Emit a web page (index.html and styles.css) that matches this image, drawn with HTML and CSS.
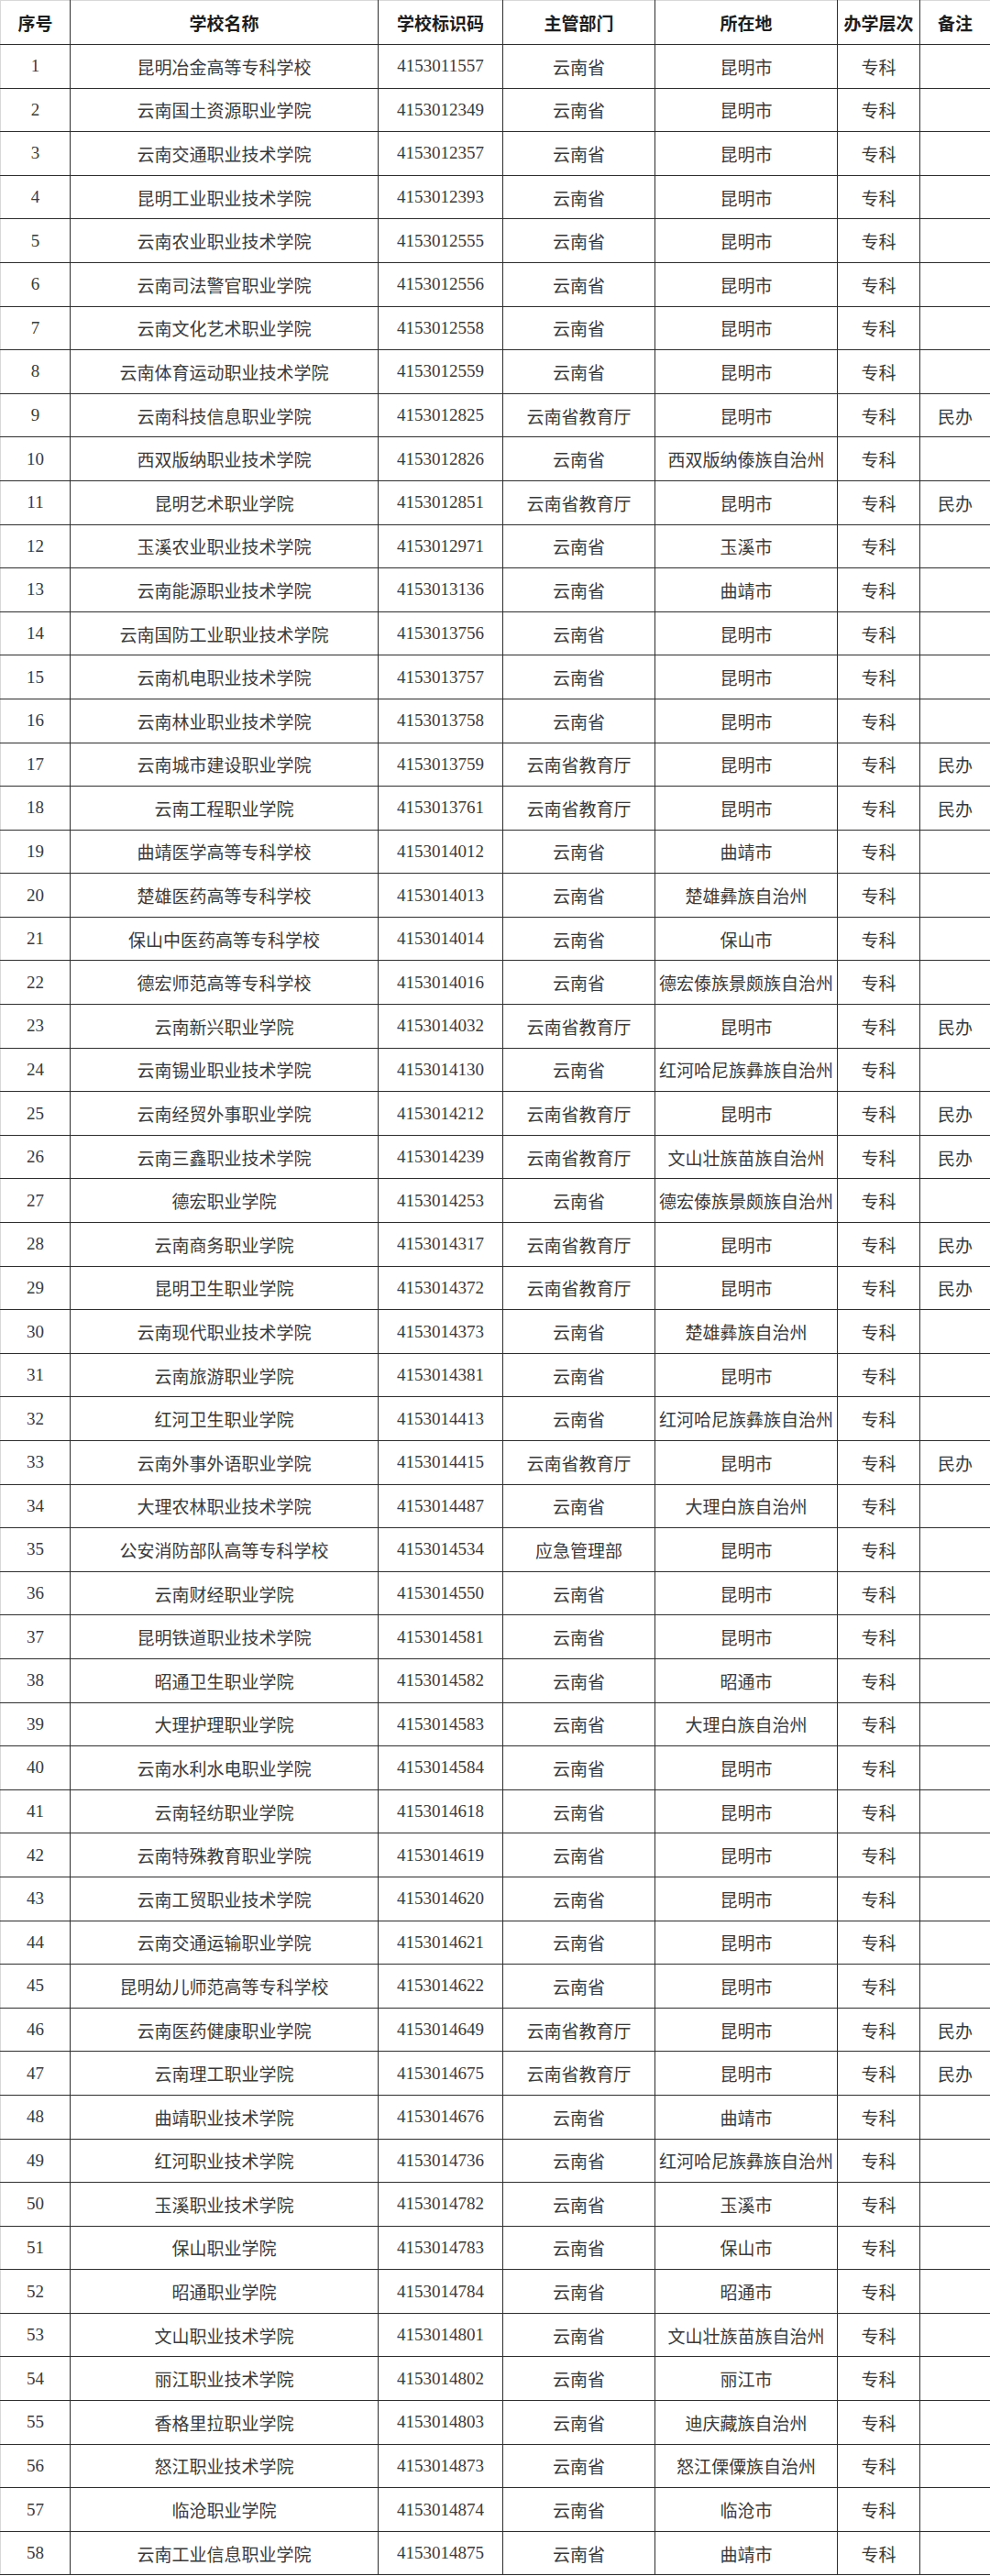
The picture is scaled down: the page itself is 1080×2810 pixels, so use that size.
FILE: index.html
```html
<!DOCTYPE html>
<html lang="zh-CN">
<head>
<meta charset="utf-8">
<title>云南省高职专科院校名单</title>
<link rel="stylesheet" href="styles.css">
</head>
<body>
<table class="list">
<colgroup>
<col class="c-no"><col class="c-name"><col class="c-code"><col class="c-dept"><col class="c-loc"><col class="c-level"><col class="c-note">
</colgroup>
<thead>
<tr><th>序号</th><th>学校名称</th><th>学校标识码</th><th>主管部门</th><th>所在地</th><th>办学层次</th><th>备注</th></tr>
</thead>
<tbody>
<tr><td>1</td><td>昆明冶金高等专科学校</td><td>4153011557</td><td>云南省</td><td>昆明市</td><td>专科</td><td></td></tr>
<tr><td>2</td><td>云南国土资源职业学院</td><td>4153012349</td><td>云南省</td><td>昆明市</td><td>专科</td><td></td></tr>
<tr><td>3</td><td>云南交通职业技术学院</td><td>4153012357</td><td>云南省</td><td>昆明市</td><td>专科</td><td></td></tr>
<tr><td>4</td><td>昆明工业职业技术学院</td><td>4153012393</td><td>云南省</td><td>昆明市</td><td>专科</td><td></td></tr>
<tr><td>5</td><td>云南农业职业技术学院</td><td>4153012555</td><td>云南省</td><td>昆明市</td><td>专科</td><td></td></tr>
<tr><td>6</td><td>云南司法警官职业学院</td><td>4153012556</td><td>云南省</td><td>昆明市</td><td>专科</td><td></td></tr>
<tr><td>7</td><td>云南文化艺术职业学院</td><td>4153012558</td><td>云南省</td><td>昆明市</td><td>专科</td><td></td></tr>
<tr><td>8</td><td>云南体育运动职业技术学院</td><td>4153012559</td><td>云南省</td><td>昆明市</td><td>专科</td><td></td></tr>
<tr><td>9</td><td>云南科技信息职业学院</td><td>4153012825</td><td>云南省教育厅</td><td>昆明市</td><td>专科</td><td>民办</td></tr>
<tr><td>10</td><td>西双版纳职业技术学院</td><td>4153012826</td><td>云南省</td><td>西双版纳傣族自治州</td><td>专科</td><td></td></tr>
<tr><td>11</td><td>昆明艺术职业学院</td><td>4153012851</td><td>云南省教育厅</td><td>昆明市</td><td>专科</td><td>民办</td></tr>
<tr><td>12</td><td>玉溪农业职业技术学院</td><td>4153012971</td><td>云南省</td><td>玉溪市</td><td>专科</td><td></td></tr>
<tr><td>13</td><td>云南能源职业技术学院</td><td>4153013136</td><td>云南省</td><td>曲靖市</td><td>专科</td><td></td></tr>
<tr><td>14</td><td>云南国防工业职业技术学院</td><td>4153013756</td><td>云南省</td><td>昆明市</td><td>专科</td><td></td></tr>
<tr><td>15</td><td>云南机电职业技术学院</td><td>4153013757</td><td>云南省</td><td>昆明市</td><td>专科</td><td></td></tr>
<tr><td>16</td><td>云南林业职业技术学院</td><td>4153013758</td><td>云南省</td><td>昆明市</td><td>专科</td><td></td></tr>
<tr><td>17</td><td>云南城市建设职业学院</td><td>4153013759</td><td>云南省教育厅</td><td>昆明市</td><td>专科</td><td>民办</td></tr>
<tr><td>18</td><td>云南工程职业学院</td><td>4153013761</td><td>云南省教育厅</td><td>昆明市</td><td>专科</td><td>民办</td></tr>
<tr><td>19</td><td>曲靖医学高等专科学校</td><td>4153014012</td><td>云南省</td><td>曲靖市</td><td>专科</td><td></td></tr>
<tr><td>20</td><td>楚雄医药高等专科学校</td><td>4153014013</td><td>云南省</td><td>楚雄彝族自治州</td><td>专科</td><td></td></tr>
<tr><td>21</td><td>保山中医药高等专科学校</td><td>4153014014</td><td>云南省</td><td>保山市</td><td>专科</td><td></td></tr>
<tr><td>22</td><td>德宏师范高等专科学校</td><td>4153014016</td><td>云南省</td><td>德宏傣族景颇族自治州</td><td>专科</td><td></td></tr>
<tr><td>23</td><td>云南新兴职业学院</td><td>4153014032</td><td>云南省教育厅</td><td>昆明市</td><td>专科</td><td>民办</td></tr>
<tr><td>24</td><td>云南锡业职业技术学院</td><td>4153014130</td><td>云南省</td><td>红河哈尼族彝族自治州</td><td>专科</td><td></td></tr>
<tr><td>25</td><td>云南经贸外事职业学院</td><td>4153014212</td><td>云南省教育厅</td><td>昆明市</td><td>专科</td><td>民办</td></tr>
<tr><td>26</td><td>云南三鑫职业技术学院</td><td>4153014239</td><td>云南省教育厅</td><td>文山壮族苗族自治州</td><td>专科</td><td>民办</td></tr>
<tr><td>27</td><td>德宏职业学院</td><td>4153014253</td><td>云南省</td><td>德宏傣族景颇族自治州</td><td>专科</td><td></td></tr>
<tr><td>28</td><td>云南商务职业学院</td><td>4153014317</td><td>云南省教育厅</td><td>昆明市</td><td>专科</td><td>民办</td></tr>
<tr><td>29</td><td>昆明卫生职业学院</td><td>4153014372</td><td>云南省教育厅</td><td>昆明市</td><td>专科</td><td>民办</td></tr>
<tr><td>30</td><td>云南现代职业技术学院</td><td>4153014373</td><td>云南省</td><td>楚雄彝族自治州</td><td>专科</td><td></td></tr>
<tr><td>31</td><td>云南旅游职业学院</td><td>4153014381</td><td>云南省</td><td>昆明市</td><td>专科</td><td></td></tr>
<tr><td>32</td><td>红河卫生职业学院</td><td>4153014413</td><td>云南省</td><td>红河哈尼族彝族自治州</td><td>专科</td><td></td></tr>
<tr><td>33</td><td>云南外事外语职业学院</td><td>4153014415</td><td>云南省教育厅</td><td>昆明市</td><td>专科</td><td>民办</td></tr>
<tr><td>34</td><td>大理农林职业技术学院</td><td>4153014487</td><td>云南省</td><td>大理白族自治州</td><td>专科</td><td></td></tr>
<tr><td>35</td><td>公安消防部队高等专科学校</td><td>4153014534</td><td>应急管理部</td><td>昆明市</td><td>专科</td><td></td></tr>
<tr><td>36</td><td>云南财经职业学院</td><td>4153014550</td><td>云南省</td><td>昆明市</td><td>专科</td><td></td></tr>
<tr><td>37</td><td>昆明铁道职业技术学院</td><td>4153014581</td><td>云南省</td><td>昆明市</td><td>专科</td><td></td></tr>
<tr><td>38</td><td>昭通卫生职业学院</td><td>4153014582</td><td>云南省</td><td>昭通市</td><td>专科</td><td></td></tr>
<tr><td>39</td><td>大理护理职业学院</td><td>4153014583</td><td>云南省</td><td>大理白族自治州</td><td>专科</td><td></td></tr>
<tr><td>40</td><td>云南水利水电职业学院</td><td>4153014584</td><td>云南省</td><td>昆明市</td><td>专科</td><td></td></tr>
<tr><td>41</td><td>云南轻纺职业学院</td><td>4153014618</td><td>云南省</td><td>昆明市</td><td>专科</td><td></td></tr>
<tr><td>42</td><td>云南特殊教育职业学院</td><td>4153014619</td><td>云南省</td><td>昆明市</td><td>专科</td><td></td></tr>
<tr><td>43</td><td>云南工贸职业技术学院</td><td>4153014620</td><td>云南省</td><td>昆明市</td><td>专科</td><td></td></tr>
<tr><td>44</td><td>云南交通运输职业学院</td><td>4153014621</td><td>云南省</td><td>昆明市</td><td>专科</td><td></td></tr>
<tr><td>45</td><td>昆明幼儿师范高等专科学校</td><td>4153014622</td><td>云南省</td><td>昆明市</td><td>专科</td><td></td></tr>
<tr><td>46</td><td>云南医药健康职业学院</td><td>4153014649</td><td>云南省教育厅</td><td>昆明市</td><td>专科</td><td>民办</td></tr>
<tr><td>47</td><td>云南理工职业学院</td><td>4153014675</td><td>云南省教育厅</td><td>昆明市</td><td>专科</td><td>民办</td></tr>
<tr><td>48</td><td>曲靖职业技术学院</td><td>4153014676</td><td>云南省</td><td>曲靖市</td><td>专科</td><td></td></tr>
<tr><td>49</td><td>红河职业技术学院</td><td>4153014736</td><td>云南省</td><td>红河哈尼族彝族自治州</td><td>专科</td><td></td></tr>
<tr><td>50</td><td>玉溪职业技术学院</td><td>4153014782</td><td>云南省</td><td>玉溪市</td><td>专科</td><td></td></tr>
<tr><td>51</td><td>保山职业学院</td><td>4153014783</td><td>云南省</td><td>保山市</td><td>专科</td><td></td></tr>
<tr><td>52</td><td>昭通职业学院</td><td>4153014784</td><td>云南省</td><td>昭通市</td><td>专科</td><td></td></tr>
<tr><td>53</td><td>文山职业技术学院</td><td>4153014801</td><td>云南省</td><td>文山壮族苗族自治州</td><td>专科</td><td></td></tr>
<tr><td>54</td><td>丽江职业技术学院</td><td>4153014802</td><td>云南省</td><td>丽江市</td><td>专科</td><td></td></tr>
<tr><td>55</td><td>香格里拉职业学院</td><td>4153014803</td><td>云南省</td><td>迪庆藏族自治州</td><td>专科</td><td></td></tr>
<tr><td>56</td><td>怒江职业技术学院</td><td>4153014873</td><td>云南省</td><td>怒江傈僳族自治州</td><td>专科</td><td></td></tr>
<tr><td>57</td><td>临沧职业学院</td><td>4153014874</td><td>云南省</td><td>临沧市</td><td>专科</td><td></td></tr>
<tr><td>58</td><td>云南工业信息职业学院</td><td>4153014875</td><td>云南省</td><td>曲靖市</td><td>专科</td><td></td></tr>
</tbody>
</table>
</body>
</html>
```

FILE: styles.css
```css
html, body {
  margin: 0;
  padding: 0;
  background: #ffffff;
}

.list {
  width: 1080px;
  table-layout: fixed;
  border-collapse: collapse;
  border-top: 1px solid #d8d8d8;
  border-left: 1px solid #d8d8d8;
  border-right: 1px solid #d8d8d8;
  border-bottom: 1px solid #222;
  font-family: "Liberation Serif", "Noto Sans CJK SC", serif;
  font-size: 19px;
  color: #3a3a3a;
}

.c-no { width: 76px; }
.c-name { width: 336px; }
.c-code { width: 136px; }
.c-dept { width: 166px; }
.c-loc { width: 199px; }
.c-level { width: 90px; }
.c-note { width: 77px; }

.list th,
.list td {
  padding: 0;
  text-align: center;
  vertical-align: middle;
  border: 1px solid #2e2e2e;
  white-space: nowrap;
  overflow: hidden;
}

.list th {
  height: 47px;
  font-family: "Noto Sans CJK SC", "Liberation Sans", sans-serif;
  font-weight: 700;
  font-size: 19px;
  color: #1e1e1e;
}

.list td {
  height: 46.6px;
}

.list tr > :first-child { border-left-color: #d8d8d8; }
.list tr > :last-child { border-right-color: #d8d8d8; }
.list thead th { border-top-color: #d8d8d8; }
```
